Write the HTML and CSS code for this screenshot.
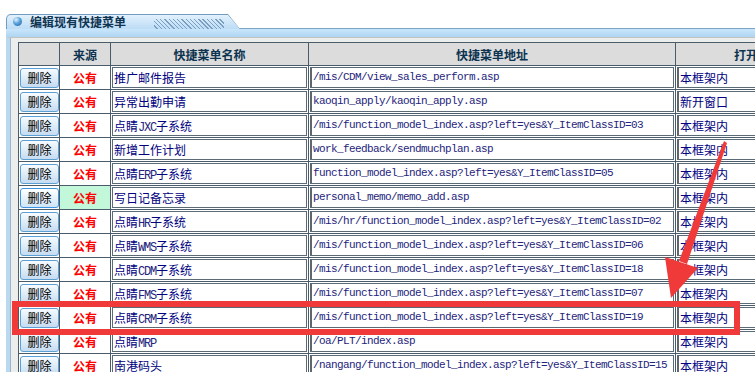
FILE: index.html
```html
<!DOCTYPE html>
<html lang="zh-CN">
<head>
    <meta charset="UTF-8">
    <meta name="viewport" content="width=device-width, initial-scale=1.0">
    <title>编辑现有快捷菜单</title>
    <link rel="stylesheet" href="styles.css">
</head>
<body>
    <div class="panel">
        <div class="tab">
            <span class="orb"></span>
            <span class="title">编辑现有快捷菜单</span>
            <span class="hatch"></span>
        </div>
        <div class="bar"></div>
        <div class="panel-body">
            <table class="menu">
                <colgroup>
                    <col class="c-del">
                    <col class="c-src">
                    <col class="c-name">
                    <col class="c-url">
                    <col class="c-mode">
                </colgroup>
                <thead>
                    <tr><th></th><th>来源</th><th>快捷菜单名称</th><th>快捷菜单地址</th><th>打开方式</th></tr>
                </thead>
                <tbody>
                    <tr>
                        <td><button class="del">删除</button></td>
                        <td class="src">公有</td>
                        <td><div class="field">推广邮件报告</div></td>
                        <td><div class="field url">/mis/CDM/view_sales_perform.asp</div></td>
                        <td><div class="field mode">本框架内</div></td>
                    </tr>
                    <tr>
                        <td><button class="del">删除</button></td>
                        <td class="src">公有</td>
                        <td><div class="field">异常出勤申请</div></td>
                        <td><div class="field url">kaoqin_apply/kaoqin_apply.asp</div></td>
                        <td><div class="field mode">新开窗口</div></td>
                    </tr>
                    <tr>
                        <td><button class="del">删除</button></td>
                        <td class="src">公有</td>
                        <td><div class="field">点睛<span class="lat">JXC</span>子系统</div></td>
                        <td><div class="field url">/mis/function_model_index.asp?left=yes&amp;Y_ItemClassID=03</div></td>
                        <td><div class="field mode">本框架内</div></td>
                    </tr>
                    <tr>
                        <td><button class="del">删除</button></td>
                        <td class="src">公有</td>
                        <td><div class="field">新增工作计划</div></td>
                        <td><div class="field url">work_feedback/sendmuchplan.asp</div></td>
                        <td><div class="field mode">本框架内</div></td>
                    </tr>
                    <tr>
                        <td><button class="del">删除</button></td>
                        <td class="src">公有</td>
                        <td><div class="field">点睛<span class="lat">ERP</span>子系统</div></td>
                        <td><div class="field url">function_model_index.asp?left=yes&amp;Y_ItemClassID=05</div></td>
                        <td><div class="field mode">本框架内</div></td>
                    </tr>
                    <tr>
                        <td><button class="del hover">删除</button></td>
                        <td class="src picked">公有</td>
                        <td><div class="field">写日记备忘录</div></td>
                        <td><div class="field url">personal_memo/memo_add.asp</div></td>
                        <td><div class="field mode">本框架内</div></td>
                    </tr>
                    <tr>
                        <td><button class="del">删除</button></td>
                        <td class="src">公有</td>
                        <td><div class="field">点睛<span class="lat">HR</span>子系统</div></td>
                        <td><div class="field url">/mis/hr/function_model_index.asp?left=yes&amp;Y_ItemClassID=02</div></td>
                        <td><div class="field mode">本框架内</div></td>
                    </tr>
                    <tr>
                        <td><button class="del">删除</button></td>
                        <td class="src">公有</td>
                        <td><div class="field">点睛<span class="lat">WMS</span>子系统</div></td>
                        <td><div class="field url">/mis/function_model_index.asp?left=yes&amp;Y_ItemClassID=06</div></td>
                        <td><div class="field mode">本框架内</div></td>
                    </tr>
                    <tr>
                        <td><button class="del">删除</button></td>
                        <td class="src">公有</td>
                        <td><div class="field">点睛<span class="lat">CDM</span>子系统</div></td>
                        <td><div class="field url">/mis/function_model_index.asp?left=yes&amp;Y_ItemClassID=18</div></td>
                        <td><div class="field mode">本框架内</div></td>
                    </tr>
                    <tr>
                        <td><button class="del">删除</button></td>
                        <td class="src">公有</td>
                        <td><div class="field">点睛<span class="lat">FMS</span>子系统</div></td>
                        <td><div class="field url">/mis/function_model_index.asp?left=yes&amp;Y_ItemClassID=07</div></td>
                        <td><div class="field mode">本框架内</div></td>
                    </tr>
                    <tr>
                        <td><button class="del">删除</button></td>
                        <td class="src">公有</td>
                        <td><div class="field">点睛<span class="lat">CRM</span>子系统</div></td>
                        <td><div class="field url">/mis/function_model_index.asp?left=yes&amp;Y_ItemClassID=19</div></td>
                        <td><div class="field mode">本框架内</div></td>
                    </tr>
                    <tr>
                        <td><button class="del">删除</button></td>
                        <td class="src">公有</td>
                        <td><div class="field">点睛<span class="lat">MRP</span></div></td>
                        <td><div class="field url">/oa/PLT/index.asp</div></td>
                        <td><div class="field mode">本框架内</div></td>
                    </tr>
                    <tr>
                        <td><button class="del">删除</button></td>
                        <td class="src">公有</td>
                        <td><div class="field">南港码头</div></td>
                        <td><div class="field url">/nangang/function_model_index.asp?left=yes&amp;Y_ItemClassID=15</div></td>
                        <td><div class="field mode">本框架内</div></td>
                    </tr>
                </tbody>
            </table>
        </div>
    </div>

    <!-- annotation drawn over the screenshot -->
    <div class="mark"></div>
    <svg class="arrow" width="755" height="372" viewBox="0 0 755 372">
        <polygon points="724,141 727,143 687,264 679,261" fill="#f03a3a"/>
        <polygon points="665,257 698,268 671,298" fill="#f03a3a"/>
    </svg>
</body>
</html>
```

FILE: styles.css
```css
html, body {
    margin: 0;
    padding: 0;
    overflow: hidden;
    background: #fff;
    font-family: "Noto Sans CJK SC", "Liberation Sans", sans-serif;
    font-size: 12px;
}
.panel {
    margin: 14px 0 0 6px;
}
.tab {
    display: flex;
    align-items: center;
    width: 234px;
    height: 15px;
    background: #6f9cc0;
    clip-path: polygon(0 0, 222px 0, 234px 15px, 0 15px);
    border-top-left-radius: 5px;
    position: relative;
}
.tab::before {
    content: "";
    position: absolute;
    left: 1px;
    top: 1px;
    right: 0;
    bottom: 0;
    background: linear-gradient(180deg, #e2f1fc, #bcdcf5);
    clip-path: polygon(0 0, 221px 0, 233px 14px, 0 14px);
    border-top-left-radius: 4px;
}
.orb {
    position: relative;
    width: 9px;
    height: 9px;
    margin-left: 7px;
    border-radius: 50%;
    background: radial-gradient(circle at 35% 30%, #e6f4ff 0, #5aa2dc 45%, #1d5d9e 100%);
}
.title {
    position: relative;
    margin-left: 8px;
    font-weight: bold;
    font-size: 12px;
    line-height: 15px;
    color: #0f3452;
}
.hatch {
    position: relative;
    margin-left: 28px;
    width: 70px;
    height: 10px;
    margin-top: 4px;
    background: repeating-linear-gradient(45deg, transparent 0 2px, #7b9fc0 2px 3px);
}
.bar {
    height: 8px;
    border-top: 1px solid #7aa3c4;
    background: linear-gradient(180deg, #c9e6fb, #aed5f3);
    margin-top: -1px;
}
.panel-body {
    background: #eceeee;
    border-top: 1px solid #bfc4bf;
    border-left: 4px solid #b9d9f1;
    padding: 4px 0 0 8px;
    height: 400px;
    box-shadow: inset 1px 0 0 #9fb3c2;
}
.menu {
    border-collapse: collapse;
    table-layout: fixed;
    width: 822px;
    background: #fff;
}
.c-del { width: 41px; }
.c-src { width: 51px; }
.c-name { width: 198px; }
.c-url { width: 367px; }
.c-mode { width: 165px; }
.menu th {
    height: 22px;
    padding: 0;
    border: 1px solid #4a5c69;
    background: #dcdcdc;
    color: #0c3350;
    font-weight: bold;
    font-size: 12px;
    text-align: center;
    white-space: nowrap;
    overflow: hidden;
}
.menu td {
    padding: 1px;
    border: 1px solid #4a5c69;
    height: 21px;
    white-space: nowrap;
    overflow: hidden;
}
.del {
    display: block;
    width: 39px;
    height: 20px;
    padding: 0;
    border: 1px solid #5c9fd4;
    border-radius: 3px;
    background: linear-gradient(180deg, #f6fbff, #c6dcf1);
    font-family: "Noto Sans CJK SC", sans-serif;
    font-size: 12px;
    color: #000;
}
.del.hover {
    border-color: #3f94e0;
    background: linear-gradient(180deg, #ffffff, #cfe5f8);
}
.src {
    text-align: center;
    color: #ff0000;
    font-weight: bold;
    font-size: 12px;
}
.src.picked {
    background: #c2f7da;
}
.field {
    box-sizing: border-box;
    height: 21px;
    line-height: 19px;
    border: 1px solid #5b6b76;
    padding-left: 1px;
    color: #000080;
    overflow: hidden;
}
.field.url, .field.mode {
    border-left: 2px solid #5f676d;
}
.url {
    font-family: "Liberation Mono", monospace;
    font-size: 11px;
    letter-spacing: -0.6px;
    color: #24247c;
}
.lat {
    font-family: "Liberation Mono", monospace;
    font-size: 12px;
    letter-spacing: -1.2px;
    color: #24247c;
}
.mode {
    color: #000080;
}
.mark {
    position: absolute;
    left: 12px;
    top: 301px;
    width: 716px;
    height: 22px;
    border: 6px solid #f03a3a;
}
.arrow {
    position: absolute;
    left: 0;
    top: 0;
}
```
